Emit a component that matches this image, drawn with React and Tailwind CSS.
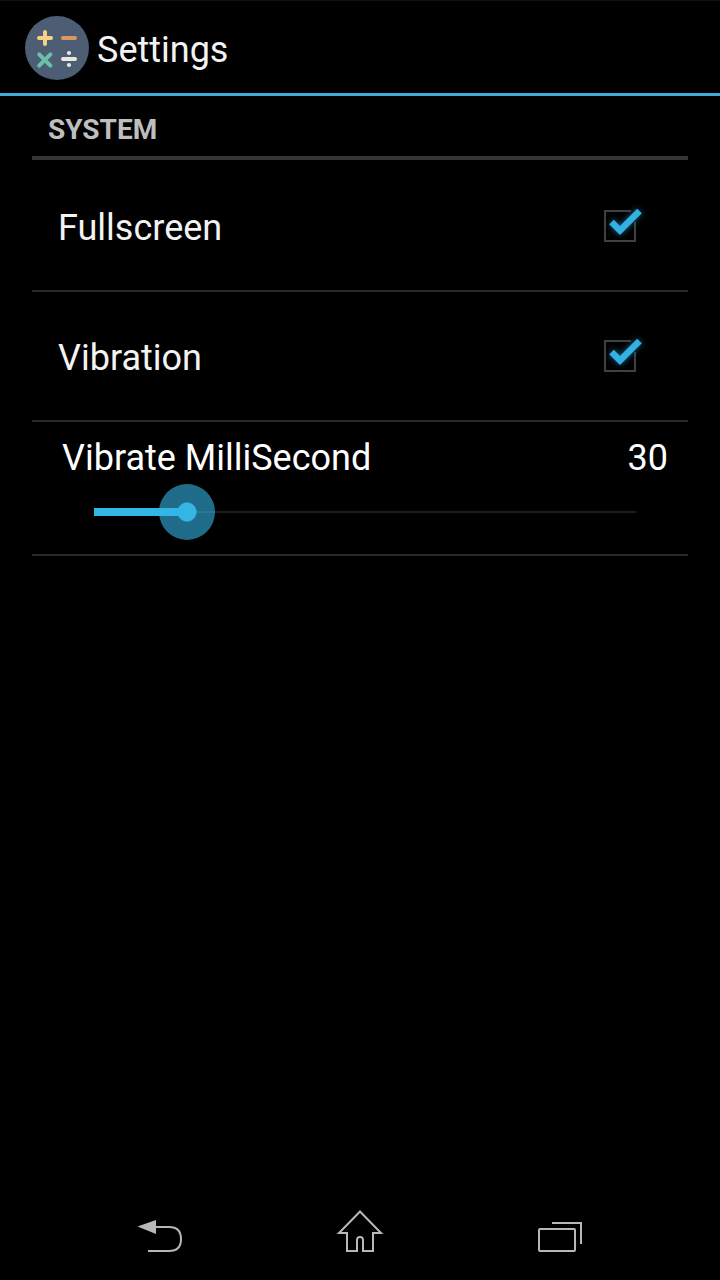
import { useState } from "react";

function CalculatorLogo() {
  return (
    <svg viewBox="0 0 64 64" className="size-16" fill="none" strokeLinecap="round" strokeWidth="4" aria-hidden="true">
      <circle cx="32" cy="32" r="32" fill="#4d5d73" />
      <path d="M20 16v12M14 22h12" stroke="#f8cf86" />
      <path d="M38 22h12" stroke="#db9862" />
      <path d="M14.2 38.4l11.2 11.2M25.4 38.4l-11.2 11.2" stroke="#6bc0a9" />
      <path d="M38 43h12" stroke="#e8e8df" />
      <circle cx="44" cy="37" r="2.1" fill="#e8e8df" />
      <circle cx="44" cy="49" r="2.1" fill="#e8e8df" />
    </svg>
  );
}

function CheckRow({ id, label, checked, onChange }) {
  return (
    <div className="flex h-[130px] items-center justify-between border-b-2 border-[#292929] pr-13 pl-[26px]">
      <label htmlFor={id} className="flex-1 pt-1 text-4xl text-[#f3f3f3]">
        {label}
      </label>
      <span className="relative flex size-8">
        <input
          id={id}
          type="checkbox"
          checked={checked}
          onChange={(e) => onChange(e.target.checked)}
          className="size-8 appearance-none border-2 border-[#404040]"
        />
        {checked && (
          <svg viewBox="0 0 52 48" className="pointer-events-none absolute -top-2 -left-1 h-12 w-[52px]" fill="none" aria-hidden="true">
            <defs>
              <filter id={`${id}-glow`} x="-40%" y="-40%" width="180%" height="180%">
                <feGaussianBlur stdDeviation="3" />
              </filter>
            </defs>
            <path d="M31 8h6v12h-6z" fill="#000" />
            <path d="M11.5 20l8.500 8.500L39.500 9" stroke="#177aa3" strokeWidth="7" opacity=".75" filter={`url(#${id}-glow)`} />
            <path d="M11.5 20l8.500 8.500L39.500 9" stroke="#33b1e2" strokeWidth="6.5" />
          </svg>
        )}
      </span>
    </div>
  );
}

function NavButton({ label, children }) {
  return (
    <button type="button" aria-label={label} className="flex items-center justify-center">
      <svg viewBox="0 0 48 48" className="size-12" fill="none" stroke="#b8b8b8" strokeWidth="2" aria-hidden="true">
        {children}
      </svg>
    </button>
  );
}

const MAX_MS = 175;

export default function App() {
  const [fullscreen, setFullscreen] = useState(true);
  const [vibration, setVibration] = useState(true);
  const [ms, setMs] = useState(30);

  return (
    <div className="flex min-h-screen flex-col bg-black font-[Roboto,sans-serif] text-white">
      <header className="flex h-24 items-center gap-2 border-t border-b-3 border-t-[#111] border-b-[#3fa9d8] pt-0.5 pl-[25px]">
        <CalculatorLogo />
        <h1 className="pt-1 text-4xl text-[#f3f3f3]">Settings</h1>
      </header>

      <main className="flex-1 px-8">
        <h2 className="mb-0.5 flex h-16 items-center border-b-4 border-[#353535] pt-2 pl-4 text-[28px] font-bold text-[#bebebe]">
          SYSTEM
        </h2>
        <CheckRow id="fullscreen" label="Fullscreen" checked={fullscreen} onChange={setFullscreen} />
        <CheckRow id="vibration" label="Vibration" checked={vibration} onChange={setVibration} />
        <div className="border-b-2 border-[#292929] pt-4 pb-3.5">
          <div className="flex items-center justify-between pr-5 pl-[30px] text-4xl">
            <label htmlFor="vibrate-ms">Vibrate MilliSecond</label>
            <output htmlFor="vibrate-ms">{ms}</output>
          </div>
          <div className="relative mt-1.5 mr-6 ml-[34px] h-14">
            <div className="absolute inset-x-7 top-[27px] h-0.5 bg-[#1d1d1d]" />
            <div className="absolute inset-x-7 top-6 h-2">
              <div className="h-full bg-[#33b5e5]" style={{ width: `${(ms / MAX_MS) * 100}%` }} />
            </div>
            <input
              id="vibrate-ms"
              type="range"
              min="0"
              max={MAX_MS}
              value={ms}
              onChange={(e) => setMs(Number(e.target.value))}
              className="relative block h-14 w-full appearance-none bg-transparent [&::-webkit-slider-thumb]:size-14 [&::-webkit-slider-thumb]:appearance-none [&::-webkit-slider-thumb]:rounded-full [&::-webkit-slider-thumb]:bg-[radial-gradient(circle,#33b5e5_9px,#33b5e599_10px)]"
            />
          </div>
        </div>
      </main>

      <nav className="grid h-24 grid-cols-3 px-[60px]">
        <NavButton label="Back">
          <path d="M19 19h14q12 0 12 12t-12 12H12" />
          <path d="M1.500 18.500L20 12v14z" fill="#b8b8b8" stroke="none" />
        </NavButton>
        <NavButton label="Home">
          <path d="M24 3.500L3 25H11v18h10v-11q0-3 3-3t3 3v11h10V25h8z" />
        </NavButton>
        <NavButton label="Recent apps">
          <rect x="3" y="21" width="36" height="22" rx="1" />
          <path d="M16 15h29v21" />
        </NavButton>
      </nav>
    </div>
  );
}
